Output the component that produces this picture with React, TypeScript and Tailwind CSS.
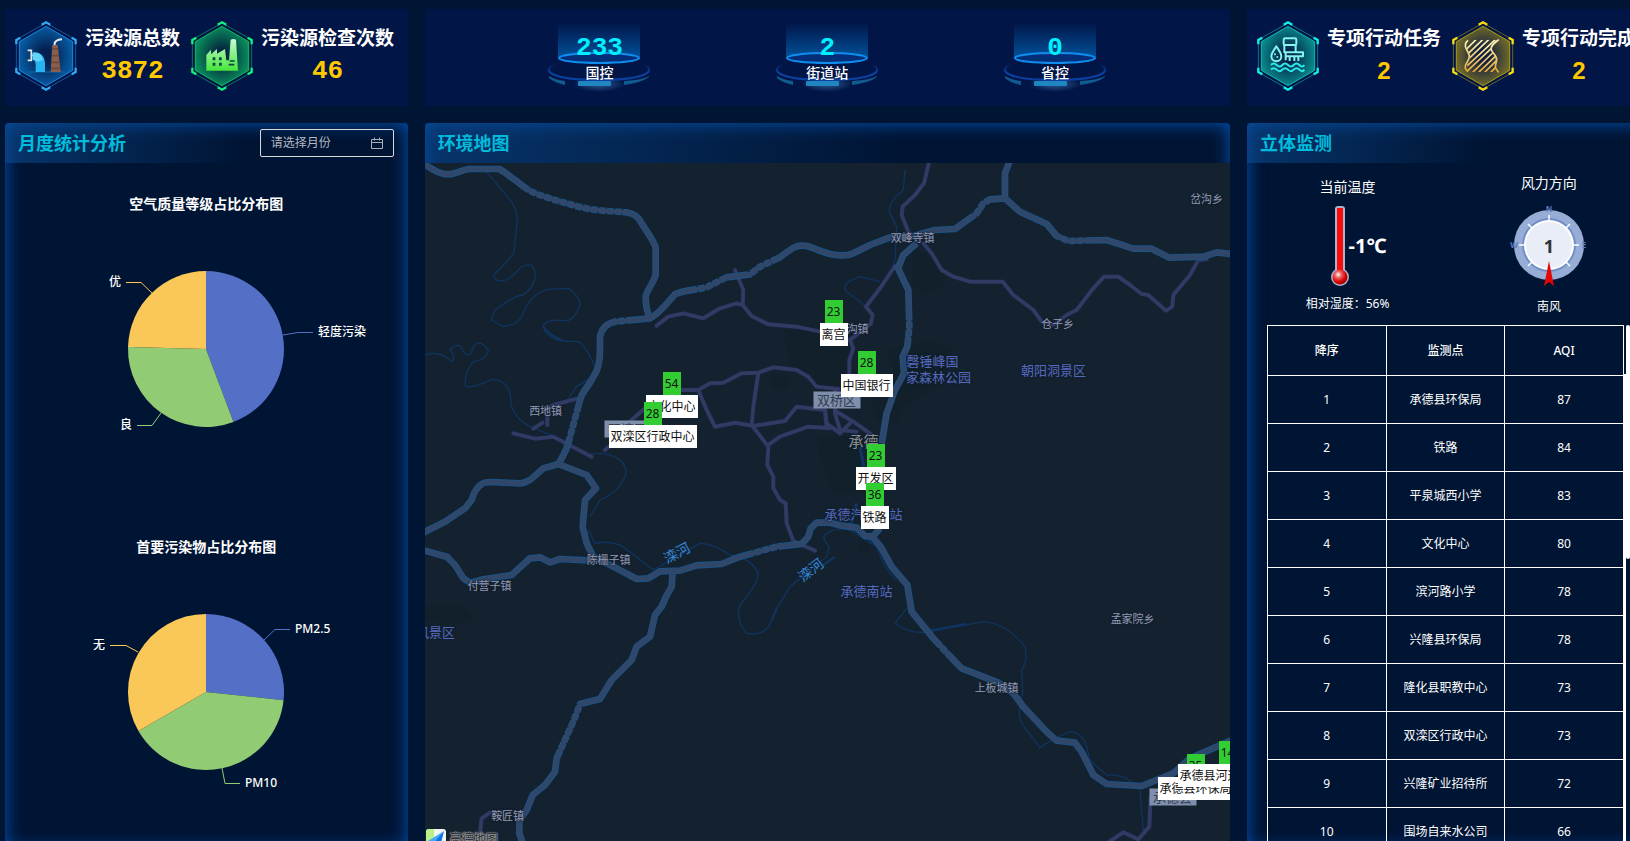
import type { ReactNode } from "react";

const FONT = "font-['Noto_Sans','Noto_Sans_CJK_SC',sans-serif]";
const CJK = "font-['Noto_Sans_CJK_SC',sans-serif]";

/* ---------- hexagon badges ---------- */

type HexProps = { id: string; bright: string; line: string; edge: string; core: string; children: ReactNode };

function Hexagon({ id, bright, line, edge, core, children }: HexProps) {
  return (
    <svg viewBox="0 0 186 210" className="h-[70px] w-[62px] shrink-0" aria-hidden="true">
      <defs>
        <radialGradient id={id} cx="50%" cy="50%" r="56%">
          <stop offset="0.2" stopColor={core} />
          <stop offset="1" stopColor={edge} />
        </radialGradient>
      </defs>
      <polygon points="93,6 182,56 182,154 93,204 4,154 4,56" fill="none" stroke={line} strokeOpacity="0.6" strokeWidth="3" />
      <polygon points="93,16 173,62 173,148 93,194 13,148 13,62" fill={`url(#${id})`} stroke={line} strokeWidth="3" />
      <g fill="none" stroke={bright} strokeWidth="7">
        <path d="M80,11 L93,4 L106,11" />
        <path d="M80,199 L93,206 L106,199" />
        <path d="M170,50 L182,57 L182,70" />
        <path d="M170,160 L182,153 L182,140" />
        <path d="M16,50 L4,57 L4,70" />
        <path d="M16,160 L4,153 L4,140" />
      </g>
      {children}
    </svg>
  );
}

function PollutionSource() {
  return (
    <Hexagon id="hx-blue" bright="#2fa8f0" line="#1c86d8" edge="#0863ad" core="#04204f">
      <path d="M35,153 H150" stroke="#0d6aa8" strokeWidth="3" />
      <path d="M38,88 H49 V118 H38 M49,103 H54" fill="none" stroke="#dfe8f2" strokeWidth="5" />
      <path d="M53,95 C78,90 90,108 90,126 V153 H62 V134 C62,122 58,117 53,117 Z" fill="#25b4ee" />
      <path d="M53,95 C72,92 82,102 84,118 L66,122 C62,117 58,117 53,117 Z" fill="#63d3fa" />
      <path d="M112,72 H128 L137,153 H107 Z" fill="#8a5f4b" />
      <path d="M111,84 H130 M110,104 H132 M109,124 H134 M108,142 H136" stroke="#6d4939" strokeWidth="5" />
      <path d="M119,72 C117,62 126,56 141,55" fill="none" stroke="#e9edf3" strokeWidth="6" />
    </Hexagon>
  );
}

function Inspection() {
  return (
    <Hexagon id="hx-green" bright="#14f07c" line="#12b766" edge="#0a9a5e" core="#04263f">
      <defs>
        <linearGradient id="hx-factory" x1="0" y1="0" x2="0" y2="1">
          <stop offset="0" stopColor="#c9fbd3" />
          <stop offset="1" stopColor="#45e63a" />
        </linearGradient>
      </defs>
      <path d="M46,149 V102 L60,86 V100 L78,84 V98 L102,84 L106,118 H114 L119,56 Q127,52 135,56 L141,149 Z" fill="url(#hx-factory)" />
      <path d="M65,109 h8 v9 h-8z M84,109 h8 v9 h-8z M65,125 h8 v9 h-8z M84,125 h8 v9 h-8z" fill="#06463f" />
      <path d="M116,120 h15 M113,131 h17" stroke="#06463f" strokeWidth="5" />
    </Hexagon>
  );
}

function ActionTask() {
  return (
    <Hexagon id="hx-cyan" bright="#15f0ea" line="#12b9b4" edge="#0a9592" core="#04264b">
      <g fill="none" stroke="#84f4ee" strokeWidth="6" strokeLinejoin="round">
        <path d="M58,76 C68,90 73,98 73,106 A15,15 0 0 1 43,106 C43,98 48,90 58,76 Z" />
        <rect x="80" y="52" width="38" height="20" rx="4" />
        <path d="M82,72 V94 H138 V106 H124 M116,72 V92" />
        <path d="M86,96 V118 M98,106 V120 M112,106 V120 M124,106 V120 M88,106 H124" />
        <path d="M42,132 q8,-9 17,0 t17,0 t17,0 t17,0 t17,0 t15,0" stroke="#2fe8ea" />
        <path d="M42,146 q8,-9 17,0 t17,0 t17,0 t17,0 t17,0 t15,0" stroke="#2fe8ea" />
      </g>
      <circle cx="54" cy="100" r="3" fill="#84f4ee" />
      <circle cx="61" cy="108" r="3" fill="#84f4ee" />
    </Hexagon>
  );
}

function ActionDone() {
  return (
    <Hexagon id="hx-gold" bright="#f6dd10" line="#a99a14" edge="#7d7428" core="#101c3f">
      <defs>
        <linearGradient id="hx-river" gradientUnits="userSpaceOnUse" x1="0" y1="56" x2="0" y2="154">
          <stop offset="0" stopColor="#fdfbc4" />
          <stop offset="1" stopColor="#e3a636" />
        </linearGradient>
        <clipPath id="hx-band">
          <path d="M44,56 L140,56 C128,66 116,74 118,84 C122,98 136,104 134,118 C132,132 124,136 142,154 L48,154 C34,146 38,134 46,122 C56,108 50,100 42,86 C36,72 38,64 44,56 Z" />
        </clipPath>
      </defs>
      <g fill="none" stroke="url(#hx-river)" strokeWidth="5">
        <path d="M48,58 C38,66 38,76 44,86 C52,100 56,108 46,122 C38,134 36,144 48,152" />
        <path d="M140,56 C128,66 114,74 118,86 C122,98 136,104 134,118 C132,132 124,138 140,154" />
        <path
          clipPath="url(#hx-band)"
          d="M44,84 L74,54 M46,100 L94,54 M54,110 L112,54 M46,134 L130,56 M44,152 L118,82 M62,154 L122,96 M80,154 L130,106 M98,154 L134,118 M116,154 L134,136"
        />
      </g>
    </Hexagon>
  );
}

function Stat({ icon, label, value, mono }: { icon: ReactNode; label: string; value: string; mono?: boolean }) {
  return (
    <div className="flex shrink-0 items-center gap-2">
      {icon}
      <div className="flex flex-col items-center pb-[2px]">
        <span className="text-[19px] leading-8 font-bold whitespace-nowrap text-white">{label}</span>
        <span
          className={
            mono
              ? "font-['Liberation_Mono',monospace] text-[26px] leading-9 font-bold text-[#ffc800]"
              : "font-['Liberation_Sans',sans-serif] text-2xl leading-9 font-bold text-[#ffc800]"
          }
        >
          {value}
        </span>
      </div>
    </div>
  );
}

/* ---------- glowing platforms ---------- */

function Platform({ value, label }: { value: string; label: string }) {
  return (
    <div className="relative flex w-[106px] flex-col items-center">
      <svg viewBox="-1 0 106 80" className="absolute top-0 left-0 h-20 w-[106px]" aria-hidden="true">
        <defs>
          <linearGradient id="beam" x1="0" y1="0" x2="0" y2="1">
            <stop offset="0" stopColor="#0060b0" stopOpacity="0" />
            <stop offset="1" stopColor="#0068b8" stopOpacity="0.75" />
          </linearGradient>
          <linearGradient id="rim" x1="0" y1="0" x2="0" y2="1">
            <stop offset="0" stopColor="#0b3fa0" stopOpacity="0" />
            <stop offset="0.5" stopColor="#0b3fa0" />
          </linearGradient>
          <radialGradient id="floor">
            <stop offset="0" stopColor="#5fa0d8" stopOpacity="0.5" />
            <stop offset="1" stopColor="#5fa0d8" stopOpacity="0" />
          </radialGradient>
        </defs>
        <path d="M11,6 H93 V42 H11 Z" fill="url(#beam)" />
        <ellipse cx="52" cy="42" rx="40" ry="5" fill="#052e78" stroke="#0f8ef0" strokeWidth="2" />
        <ellipse cx="52" cy="68" rx="26" ry="8" fill="url(#floor)" />
        <path d="M2,60 Q8,64 18,65 L18,69 Q8,67 2,62 Z" fill="#125b90" />
        <path d="M102,60 Q96,64 77,65 L77,69 Q94,67 102,61 Z" fill="#125b90" />
        <rect x="31" y="65" width="33" height="5" rx="1" fill="#1f86c2" />
        <path d="M8,48 C-6,54 2,64 52,64 C102,64 110,54 96,48" fill="none" stroke="url(#rim)" strokeWidth="2" />
      </svg>
      <span className="relative pt-4 font-['Liberation_Mono',monospace] text-[26px] leading-8 font-bold text-[#00f0ff]">{value}</span>
      <span className={`relative text-sm leading-4 font-medium text-white ${CJK}`}>{label}</span>
    </div>
  );
}

/* ---------- panels ---------- */

function Panel({ title, action, children }: { title: string; action?: ReactNode; children: ReactNode }) {
  return (
    <section className="relative flex h-[726px] min-w-0 flex-col overflow-hidden rounded-sm bg-[#001433] shadow-[inset_0_0_18px_#0055b8]">
      <header className="flex h-10 shrink-0 items-center justify-between bg-linear-to-r from-[#0b4a90]/60 to-transparent to-60% pr-[14px] pl-[13px]">
        <h2 className="text-lg font-bold text-[#00bcdc]">{title}</h2>
        {action}
      </header>
      {children}
    </section>
  );
}

function MonthPicker() {
  return (
    <label className="flex h-7 w-[134px] items-center rounded-[2px] border border-[#d9d9d9] px-[10px]">
      <input
        type="text"
        aria-label="月份"
        placeholder="请选择月份"
        className="w-full min-w-0 bg-transparent text-xs text-white outline-none placeholder:text-[#b4b8c0]"
      />
      <svg viewBox="0 0 12 12" className="h-3 w-3 shrink-0" fill="none" stroke="#aab0bb" aria-hidden="true">
        <path d="M0.5,2.5 H11.5 V11.5 H0.5 Z M0.5,5.5 H11.5 M3.5,0.5 V3.5 M8.5,0.5 V3.5" />
      </svg>
    </label>
  );
}

type Slice = { name: string; from: number; to: number; color: string; line: string; x: number; y: number; end?: boolean };

function Pie({ title, slices }: { title: string; slices: Slice[] }) {
  const point = (deg: number) => {
    const a = (deg * Math.PI) / 180;
    return `${(201 + 78 * Math.sin(a)).toFixed(2)},${(145 - 78 * Math.cos(a)).toFixed(2)}`;
  };
  return (
    <figure className="flex h-[343px] shrink-0 flex-col items-center">
      <figcaption className="text-sm leading-5 font-bold text-white">{title}</figcaption>
      <svg viewBox="0 10 403 260" className="h-[260px] w-[403px]">
        {slices.map((s) => (
          <path
            key={s.name}
            d={`M201,145 L${point(s.from)} A78,78 0 ${s.to - s.from > 180 ? 1 : 0} 1 ${point(s.to)} Z`}
            fill={s.color}
          />
        ))}
        {slices.map((s) => (
          <g key={s.name}>
            <polyline points={s.line} fill="none" stroke={s.color} strokeWidth="1" />
            <text x={s.x} y={s.y} textAnchor={s.end ? "end" : "start"} className="fill-white text-xs font-medium">
              {s.name}
            </text>
          </g>
        ))}
      </svg>
    </figure>
  );
}

const AIR: Slice[] = [
  { name: "轻度污染", from: 0, to: 159.4, color: "#5470c6", line: "278,131 293,128.5 308,128.5", x: 313, y: 132 },
  { name: "良", from: 159.4, to: 271.5, color: "#91cc75", line: "156,209 147,221.5 132,221.5", x: 127, y: 225, end: true },
  { name: "优", from: 271.5, to: 360, color: "#fac858", line: "147,89 136,78.5 121,78.5", x: 116, y: 82, end: true },
];

const POLLUTANT: Slice[] = [
  { name: "PM2.5", from: 0, to: 96, color: "#5470c6", line: "259,93 270,82.5 285,82.5", x: 290, y: 86 },
  { name: "PM10", from: 96, to: 240, color: "#91cc75", line: "217,221 220,236.5 235,236.5", x: 240, y: 240 },
  { name: "无", from: 240, to: 360, color: "#fac858", line: "133,105 121,98.5 105,98.5", x: 100, y: 102, end: true },
];

/* ---------- map ---------- */

const HIGHWAYS = [
  "M0,5 C35,25 55,43 85,43 C110,42 125,30 145,27 L238,27 C270,45 300,75 330,93 C370,112 420,125 480,141 C530,155 580,153 620,157 C645,162 655,172 665,190 C680,215 700,240 707,262 L707,345 C700,370 680,390 677,410 C677,440 683,460 690,475",
  "M0,1125 L15,1115 L75,1085 L135,1045 L155,1020 C160,1000 170,982 185,972 C195,966 205,966 215,966 L300,970 C330,968 345,945 370,925 L415,912 C435,880 445,860 450,830 L475,740 C485,690 500,690 520,650 C535,630 540,600 540,570 L540,530 C545,505 560,490 585,485 L690,475 C720,460 740,430 765,403 C790,390 830,390 860,382 L920,352 L990,343 L1020,320 L1080,292 C1110,270 1125,255 1150,257 C1170,258 1190,270 1210,276 C1240,286 1275,290 1300,280 L1350,255 L1410,232 L1480,228 L1545,210 L1605,207 L1670,160 L1690,130 L1710,118 L1755,115",
  "M1755,115 L1755,40 L1762,22 L1770,0",
  "M1755,115 L1800,155 L1880,192 L1910,228 L1945,243 L2060,240 L2140,266 L2195,266 L2248,293 L2350,290 L2390,277 L2440,283",
  "M1490,250 L1450,285 L1434,325 L1465,390 L1468,500 L1462,560 L1448,590 L1452,640 L1425,690 L1400,760 L1385,850",
  "M415,912 L500,945 L528,985 L495,1020 L488,1100 L500,1150 L520,1190 L590,1225 L650,1257 L685,1255 L720,1234 L780,1232 L830,1216 L905,1212 L960,1190 L1070,1160 L1145,1152 L1165,1130 L1172,1105 L1190,1088 L1230,1088 L1260,1096 L1310,1103 L1335,1128 L1358,1130 L1385,1165 L1415,1220 L1462,1275 L1475,1355 L1540,1435 L1580,1478 L1625,1525 L1735,1568 L1780,1600 L1810,1640 L1880,1715 L1910,1742 L1965,1748 L1985,1775 L2020,1845 L2060,1872 L2165,1878 L2260,1840 L2310,1795 L2440,1738",
  "M1358,1130 L1380,1105",
  "M0,1170 L15,1172 L80,1190 L105,1215 L130,1255 L150,1268 L190,1258 L275,1245 L330,1195 L360,1192 L390,1207 L420,1197 L520,1202",
  "M758,1232 L755,1280 L738,1310 L725,1340 L705,1365 L690,1430 L650,1460 L635,1500 L575,1560 L540,1617 L480,1632 L462,1680 L430,1750 L410,1795 L405,1835 L375,1875 L338,1905 L320,1950 L298,1980 L298,2020 L315,2070",
];

const TUNNELS = [
  "M325,92 C370,112 420,125 480,141 C530,155 580,153 620,157",
  "M830,388 L860,382 L920,352 M990,343 L1020,320 L1065,298",
  "M450,830 L475,740 M590,484 L625,480",
  "M1660,165 L1690,130 L1710,118 M1920,235 L1945,243 L2000,242",
  "M1468,480 L1467,550",
  "M1000,1180 L1090,1156",
  "M478,1634 L462,1680 L430,1750 L415,1780",
  "M1560,1458 L1590,1488",
];

const ROADS = [
  "M1530,-5 L1512,70 L1485,105 L1448,140 L1445,165 L1465,215 L1490,240",
  "M1510,250 L1535,280 L1565,330 L1600,350 L1650,365 L1748,365 L1780,405 L1840,450 L1865,485 L1900,495 L1940,465 L1970,450 L2020,385 L2052,350 L2095,350 L2130,375 L2165,402 L2185,405 L2238,452 L2257,440 L2260,405 L2310,345 L2335,300 L2360,298",
  "M1425,318 L1380,385 L1338,440 L1358,465 L1353,490 L1290,540 L1300,565 L1288,600 L1288,680",
  "M710,497 L745,470 L790,460 L850,475 L900,445 L950,430 L968,435 L995,468 L1045,493 L1130,500 L1200,515",
  "M945,330 L970,390 L968,435",
  "M555,870 L600,830 L635,780 L680,740 L780,690 L835,690 L870,670 L910,668 L965,640 L1015,638 L1060,622 L1130,630 L1165,650 L1190,680 L1255,687",
  "M835,690 L860,750 L885,800 L945,788 L1000,798 L1095,783 L1130,740 L1215,750 L1220,805",
  "M1015,638 L1000,740 L995,795 L1045,860 L1042,915 L1060,950 L1060,985 L1080,1020 L1097,1030 L1100,1090 L1120,1143 L1185,1172",
  "M1045,855 L1080,830 L1165,800 L1230,805",
  "M280,820 L345,836 L400,830 L515,890",
  "M485,712 L400,735 L382,745 L382,795 M340,806 L368,788",
  "M1215,750 L1220,790 L1260,820 L1290,790 M1250,755 L1300,785 L1352,822 M1245,690 L1245,760 L1260,810 L1310,815",
  "M210,1958 L185,1975 L180,2020",
  "M2060,2050 L2110,2017 L2155,2038 L2188,2000 L2192,1910",
];

const RIVERS = [
  "M200,35 L262,110 Q300,150 290,200 L282,275 Q270,300 225,340 Q215,365 250,362 C290,355 290,310 335,315 C355,340 345,380 310,405 Q285,405 225,450 L215,480 L250,500 Q290,495 305,470 Q330,400 385,388 L445,385 Q480,410 480,435 Q465,480 440,482 Q385,475 370,495 C370,520 400,540 430,543 L475,545 Q500,560 525,620 M520,650 L470,680 L445,715",
  "M15,585 Q60,570 95,605 Q110,590 90,570 Q120,540 130,575 Q150,600 160,560 Q180,535 205,570 Q200,600 160,605 Q130,640 137,680 Q160,685 215,658 Q260,660 270,700 L275,740 Q290,780 330,800 L430,840 L500,885 Q560,870 600,900 Q630,930 610,960 Q590,1000 540,1020 L510,1070",
  "M505,1110 L525,1150 Q570,1140 610,1160 L700,1230 L840,1150 Q880,1150 930,1185 Q990,1190 1015,1240 Q1015,1270 960,1335 Q945,1380 980,1420 Q1040,1430 1055,1380 L1070,1345 L1110,1280 L1220,1190 L1228,1160 Q1200,1130 1220,1120 Q1250,1100 1290,1110 L1370,1160 Q1395,1230 1430,1260",
  "M1455,1280 L1465,1340 L1425,1390 Q1470,1425 1530,1415 L1690,1385 Q1760,1390 1815,1460 Q1825,1500 1805,1530 L1808,1600 Q1790,1660 1805,1690 L1860,1763 Q1900,1735 1950,1715 Q1990,1720 2000,1760 L2010,1800 L2060,1845 Q2120,1840 2160,1890 L2170,2010",
  "M1455,30 L1450,90 Q1400,130 1410,160 L1430,200 L1425,300 L1410,350",
  "M1380,365 L1320,350 Q1260,370 1280,395 L1340,440",
];

const TOWNS = [
  { name: "岔沟乡", x: 782, y: 36 },
  { name: "双峰寺镇", x: 488, y: 75 },
  { name: "沟镇", x: 433, y: 166 },
  { name: "仓子乡", x: 633, y: 161 },
  { name: "西地镇", x: 121, y: 248 },
  { name: "陈栅子镇", x: 184, y: 397 },
  { name: "付营子镇", x: 65, y: 423 },
  { name: "孟家院乡", x: 708, y: 456 },
  { name: "上板城镇", x: 572, y: 525 },
  { name: "鞍匠镇", x: 83, y: 653 },
];

const SPOTS = [
  { name: "磬锤峰国", x: 508, y: 198 },
  { name: "家森林公园", x: 514, y: 214 },
  { name: "朝阳洞景区", x: 629, y: 207 },
  { name: "承德汽车东站", x: 439, y: 351 },
  { name: "承德南站", x: 442, y: 428 },
  { name: "风景区", x: 11, y: 469 },
];

const DISTRICTS = [
  { name: "双桥区", x: 412, y: 237 },
  { name: "双滦区", x: 203, y: 266 },
  { name: "承德县", x: 748, y: 634 },
];

const STATIONS = [
  { name: "离宫", value: 23, x: 409, y: 137 },
  { name: "中国银行", value: 28, x: 442, y: 188 },
  { name: "文化中心", value: 54, x: 247, y: 209 },
  { name: "双滦区行政中心", value: 28, x: 228, y: 239 },
  { name: "开发区", value: 23, x: 451, y: 281 },
  { name: "铁路", value: 36, x: 450, y: 320 },
  { name: "承德县环保局", value: 35, x: 771, y: 591 },
  { name: "承德县河道管理处", value: 14, x: 803, y: 578 },
];

const HALO = "[text-shadow:0_0_2px_#14222f,0_0_2px_#14222f]";

function EnvironmentMap() {
  return (
    <div className="relative min-h-0 flex-1 overflow-hidden bg-[#14222f]">
      <svg className="absolute inset-0 h-full w-full" aria-hidden="true">
        <g transform="scale(0.33333) translate(-15 -9)" fill="none" strokeLinejoin="round">
          <g fill="#11202a">
            <path d="M1090,510 L1190,510 L1290,560 L1290,700 L1210,690 L1110,610 Z" />
            <path d="M1480,270 L1560,300 L1580,370 L1520,400 L1480,380 Z" />
            <path d="M1400,570 L1530,540 L1600,570 L1560,670 L1450,740 L1430,790 L1370,780 L1350,720 L1430,660 Z" />
            <path d="M1200,830 L1320,830 L1330,1000 L1240,1000 L1195,880 Z" />
            <path d="M15,1340 L80,1332 L130,1342 L165,1378 L110,1390 L15,1385 Z" />
            <circle cx="1080" cy="665" r="26" />
            <circle cx="1330" cy="1160" r="18" />
          </g>
          <g stroke="#10345f" strokeWidth="4">
            {RIVERS.map((d) => (
              <path key={d} d={d} />
            ))}
            <path d="M1320,860 L1335,940 M1310,1030 L1290,1100 L1370,1150" strokeWidth="10" />
            <path d="M370,500 Q385,525 430,543 M1530,1412 L1640,1392 M1245,1190 L1210,1215 M1070,1345 L1055,1380" strokeWidth="7" />
          </g>
          <g strokeLinecap="round">
            <g stroke="#2d386c" strokeWidth="12">
              {ROADS.map((d) => (
                <path key={d} d={d} />
              ))}
            </g>
            <g stroke="#343b60" strokeWidth="7">
              {ROADS.map((d) => (
                <path key={d} d={d} />
              ))}
            </g>
          </g>
          <g stroke="#1c5386" strokeWidth="20">
            {HIGHWAYS.map((d) => (
              <path key={d} d={d} />
            ))}
          </g>
          <g stroke="#14222f" strokeWidth="21" strokeDasharray="5 19">
            {TUNNELS.map((d) => (
              <path key={d} d={d} />
            ))}
          </g>
          <g stroke="#30476a" strokeWidth="14">
            {HIGHWAYS.map((d) => (
              <path key={d} d={d} />
            ))}
          </g>
        </g>
      </svg>

      {TOWNS.map((t) => (
        <span
          key={t.name}
          className={`absolute -translate-x-1/2 -translate-y-1/2 text-[11px] leading-4 whitespace-nowrap text-[#9499b4] ${HALO}`}
          style={{ left: t.x, top: t.y }}
        >
          {t.name}
        </span>
      ))}
      {SPOTS.map((t) => (
        <span
          key={t.name}
          className={`absolute -translate-x-1/2 -translate-y-1/2 text-[13px] leading-4 whitespace-nowrap text-[#5568bf] ${HALO}`}
          style={{ left: t.x, top: t.y }}
        >
          {t.name}
        </span>
      ))}
      {DISTRICTS.map((t) => (
        <span
          key={t.name}
          className="absolute w-[47px] -translate-x-1/2 -translate-y-1/2 bg-[#7f8fab] text-center text-[13px] leading-[17px] whitespace-nowrap text-[#333c4e]"
          style={{ left: t.x, top: t.y }}
        >
          {t.name}
        </span>
      ))}
      <span className={`absolute top-[278px] left-[439px] -translate-x-1/2 -translate-y-1/2 text-[15px] whitespace-nowrap text-[#8a8c90] ${HALO}`}>
        承德
      </span>
      <span className="absolute top-[390px] left-[252px] -translate-x-1/2 -translate-y-1/2 -rotate-[28deg] text-sm whitespace-nowrap text-[#3586d4]">
        滦河
      </span>
      <span className="absolute top-[407px] left-[386px] -translate-x-1/2 -translate-y-1/2 -rotate-[38deg] text-sm whitespace-nowrap text-[#3586d4]">
        滦河
      </span>

      {STATIONS.map((s) => (
        <div
          key={s.name}
          className="absolute flex -translate-x-1/2 flex-col items-center text-xs leading-[23px] whitespace-nowrap text-[#111]"
          style={{ left: s.x, top: s.y }}
        >
          <span className="bg-[#32cd32] px-[2px]">{s.value}</span>
          <span className="bg-white px-[2px]">{s.name}</span>
        </div>
      ))}

      <div className="absolute top-[666px] left-px flex items-center gap-1">
        <svg viewBox="0 0 20 20" className="h-5 w-5" aria-hidden="true">
          <rect width="20" height="20" rx="3" fill="#f2f6f0" />
          <path d="M0,3 Q0,0 3,0 H8 V9 L0,14 Z" fill="#b9f08a" />
          <path d="M18,2 L2,12 L8,13 Z" fill="#3fa9ff" />
          <path d="M18,2 L8,13 L14,18 Z" fill="#0a72e8" />
        </svg>
        <span className="text-xs leading-5 font-medium text-[#33373c] [text-shadow:0_0_1px_#c4c4c4,0_0_1px_#c4c4c4,0_0_2px_#b0b0b0]">高德地图</span>
      </div>
    </div>
  );
}

/* ---------- monitoring ---------- */

function Thermometer() {
  return (
    <svg viewBox="0 0 18 80" className="h-20 w-[18px]" aria-hidden="true">
      <defs>
        <radialGradient id="bulb" cx="38%" cy="34%" r="62%">
          <stop offset="0" stopColor="#ffffff" />
          <stop offset="0.35" stopColor="#f06060" />
          <stop offset="0.75" stopColor="#dd0808" />
          <stop offset="1" stopColor="#b00000" />
        </radialGradient>
      </defs>
      <rect x="4" y="0" width="10" height="68" rx="3" fill="#a9b4cc" />
      <circle cx="9" cy="71" r="9" fill="#a9b4cc" />
      <rect x="6" y="2" width="6" height="64" fill="#fb0a0a" />
      <circle cx="9" cy="71" r="7.5" fill="url(#bulb)" />
    </svg>
  );
}

function Compass() {
  return (
    <svg viewBox="0 0 78 82" className="h-[82px] w-[78px]" role="img" aria-label="1">
      <circle cx="39" cy="40" r="35" fill="#98add6" />
      <g className="fill-[#5f7ec0] text-[8px] font-bold" textAnchor="middle">
        <text x="39" y="7">N</text>
        <text x="4" y="43">W</text>
        <text x="74" y="43">E</text>
      </g>
      <circle cx="39" cy="40" r="27" fill="#6f8fc8" />
      <circle cx="39" cy="40" r="25" fill="#ffffff" />
      <circle cx="39" cy="40" r="23" fill="#e9edf7" />
      <path
        d="M39,10 V16 M9,40 H15 M63,40 H69 M18,19 L22,23 M60,19 L56,23 M18,61 L22,57 M60,61 L56,57"
        stroke="#ffffff"
        strokeWidth="1.5"
      />
      <text x="39" y="48" textAnchor="middle" className="fill-[#333] text-lg font-bold">1</text>
      <path d="M39,56 L44,81 L39,77 L34,81 Z" fill="#e60505" />
    </svg>
  );
}

const RANKING: [string, number][] = [
  ["承德县环保局", 87],
  ["铁路", 84],
  ["平泉城西小学", 83],
  ["文化中心", 80],
  ["滨河路小学", 78],
  ["兴隆县环保局", 78],
  ["隆化县职教中心", 73],
  ["双滦区行政中心", 73],
  ["兴隆矿业招待所", 72],
  ["围场自来水公司", 66],
];

function Monitoring() {
  return (
    <>
      <div className="grid h-[162px] shrink-0 grid-cols-2 text-center text-white">
        <div className="flex flex-col items-center pt-[14px]">
          <h3 className="text-sm leading-5">当前温度</h3>
          <div className="flex items-center pt-[9px] pl-9">
            <Thermometer />
            <strong className="w-[52px] text-left text-xl whitespace-nowrap">-1℃</strong>
          </div>
          <p className="pt-2 text-xs leading-5">相对湿度：56%</p>
        </div>
        <div className="flex flex-col items-center pt-[10px]">
          <h3 className="text-sm leading-5">风力方向</h3>
          <div className="pt-3">
            <Compass />
          </div>
          <p className="pt-[10px] text-xs leading-5">南风</p>
        </div>
      </div>
      <div className="ml-5 flex min-h-0 flex-1 items-start">
        <table className="w-[357px] table-fixed border-collapse text-center text-xs text-white">
          <thead>
            <tr className="h-[50px]">
              {["降序", "监测点", "AQI"].map((h) => (
                <th key={h} className="border border-white font-medium">{h}</th>
              ))}
            </tr>
          </thead>
          <tbody>
            {RANKING.map(([name, aqi], i) => (
              <tr key={name} className="h-12">
                <td className="border border-white">{i + 1}</td>
                <td className="border border-white">{name}</td>
                <td className="border border-white">{aqi}</td>
              </tr>
            ))}
          </tbody>
        </table>
        <div className="flex h-full w-[7px] items-start">
          <div className="mt-[49px] h-full w-[2px] bg-white" />
          <div className="h-[234px] w-1 rounded-xs bg-white" />
        </div>
      </div>
    </>
  );
}

const CARD = "flex h-[97px] min-w-0 items-start bg-[#011547]";

export default function App() {
  return (
    <main className={`h-screen w-full overflow-hidden bg-[#001433] ${FONT}`}>
      <div className="grid w-[101.2%] grid-cols-[1fr_2fr_1fr] gap-x-[17px] gap-y-[17px] pt-[9px] pl-[5px]">
        <section className={`${CARD} gap-[11px] overflow-hidden px-[10px] pt-3 ${CJK}`}>
          <Stat icon={<PollutionSource />} label="污染源总数" value="3872" mono />
          <Stat icon={<Inspection />} label="污染源检查次数" value="46" mono />
        </section>
        <section className={`${CARD} justify-evenly pt-[7px]`}>
          <Platform value="233" label="国控" />
          <Platform value="2" label="街道站" />
          <Platform value="0" label="省控" />
        </section>
        <section className={`${CARD} gap-[11px] overflow-hidden px-[10px] pt-3 ${CJK}`}>
          <Stat icon={<ActionTask />} label="专项行动任务" value="2" />
          <Stat icon={<ActionDone />} label="专项行动完成" value="2" />
        </section>

        <Panel title="月度统计分析" action={<MonthPicker />}>
          <div className="flex flex-col items-center pt-[31px]">
            <Pie title="空气质量等级占比分布图" slices={AIR} />
            <Pie title="首要污染物占比分布图" slices={POLLUTANT} />
          </div>
        </Panel>
        <Panel title="环境地图">
          <EnvironmentMap />
        </Panel>
        <Panel title="立体监测">
          <Monitoring />
        </Panel>
      </div>
    </main>
  );
}
